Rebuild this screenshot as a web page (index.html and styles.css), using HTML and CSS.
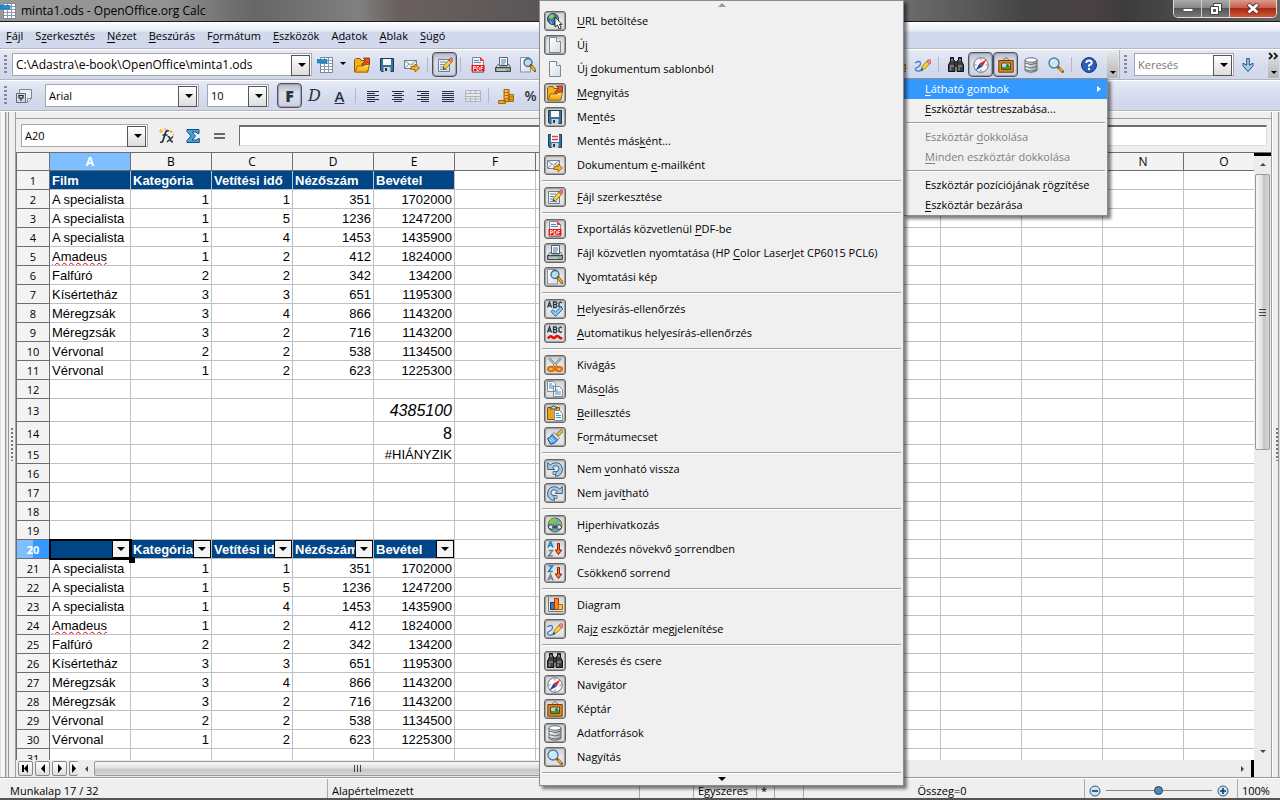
FILE: index.html
```html
<!DOCTYPE html>
<html lang="hu">
<head>
    <meta charset="UTF-8">
    <meta name="viewport" content="width=device-width, initial-scale=1.0">
    <title>minta1.ods - OpenOffice.org Calc</title>
    <link rel="stylesheet" href="styles.css">
</head>
<body>
    <!-- icon set -->
    <svg class="defs" aria-hidden="true">
        <defs>
            <linearGradient id="g-gold" x1="0" y1="0" x2="0" y2="1"><stop offset="0" stop-color="#ffe36b"/><stop offset="1" stop-color="#f0a000"/></linearGradient>
            <linearGradient id="g-page" x1="0" y1="0" x2="1" y2="1"><stop offset="0" stop-color="#fff"/><stop offset="1" stop-color="#d3dde6"/></linearGradient>
            <linearGradient id="g-blue" x1="0" y1="0" x2="0" y2="1"><stop offset="0" stop-color="#cfe9fb"/><stop offset="1" stop-color="#6fb0e0"/></linearGradient>
            <linearGradient id="g-metal" x1="0" y1="0" x2="1" y2="0"><stop offset="0" stop-color="#fafafa"/><stop offset="1" stop-color="#a2a8ac"/></linearGradient>
        </defs>
        <symbol id="i-calc" viewBox="0 0 16 16"><path d="M3.500.5h12v15h-12z" fill="#fff" stroke="#7b8794"/><path d="M7.500 1v14M11.500 1v14M4 3.500h11M4 6.500h11M4 9.500h11M4 12.500h11" stroke="#8d99a5"/><path d="M0 2.500h10v3.500H0z" fill="#1c8fd8" stroke="#0b6bb0" stroke-width=".6"/></symbol>
        <symbol id="i-url" viewBox="0 0 16 16"><circle cx="6" cy="6" r="5.500" fill="#3a78c0" stroke="#1d3f6c"/><path d="M2 3q2-2 4-2l1 3-3 2-2-1zM8 7l3-3 0 4-3 3zM2 8l3 1v2z" fill="#9ccb3b"/><path d="M8 4v10l2.400-2 1.800 4 2-1-1.700-3.600H15z" fill="#fff" stroke="#111" stroke-width=".9"/></symbol>
        <symbol id="i-page" viewBox="0 0 16 16"><path d="M2.500.5h7l4 4v11h-11z" fill="url(#g-page)" stroke="#7d8893"/><path d="M9.500.5v4h4" fill="#fff" stroke="#7d8893"/></symbol>
        <symbol id="i-open" viewBox="0 0 16 16"><path d="M.5 14.500V3L2 1.500h4l1 2h7v11z" fill="#f3b21c" stroke="#925a00"/><path d="M1 15.200L3.500 9H9l1.500-1.500h5L13.500 15.200z" fill="url(#g-gold)" stroke="#a56600"/><path d="M7.500 7.500l4-4-2-2.500h6v6l-2.200-2L9.500 9z" fill="#e4592a" stroke="#861f08" stroke-width=".8"/></symbol>
        <symbol id="i-save" viewBox="0 0 16 16"><path d="M1.500 1.500h13v13h-12l-1-1z" fill="#3f6f94" stroke="#173c5a"/><path d="M4 2h8v6H4z" fill="#f4f8fb"/><path d="M4.500 10h7v5h-7z" fill="#c9d4dc"/><path d="M6 11h2v3H6z" fill="#173c5a"/></symbol>
        <symbol id="i-saveas" viewBox="0 0 16 16"><path d="M1.500 1.500h13v13h-12l-1-1z" fill="#3f6f94" stroke="#173c5a"/><path d="M4 1h8v8H4z" fill="#fff"/><path d="M5 3.500h6M5 6.500h6" stroke="#e43a4a" stroke-width="1.600"/><path d="M4.500 10h7v5h-7z" fill="#c9d4dc"/><path d="M6 11h2v3H6z" fill="#173c5a"/></symbol>
        <symbol id="i-mail" viewBox="0 0 16 16"><path d="M.5 3.500h12v8H.5z" fill="#eef2f5" stroke="#71808d"/><path d="M1 4l5.500 4L12 4M1 11l4-4M12 11L8 7" fill="none" stroke="#71808d" stroke-width=".8"/><path d="M7 9.500h4V7l4.500 4-4.500 4v-2.500H7z" fill="#f7b030" stroke="#a25c00" stroke-width=".9"/></symbol>
        <symbol id="i-edit" viewBox="0 0 16 16"><path d="M1.500 2.500h11v12h-11z" fill="url(#g-page)" stroke="#6f7c88"/><path d="M3 5h6M3 7.500h4M3 10h3M3 12.500h7" stroke="#5b8bb2"/><path d="M6 12l1-3.500 6-6.500 2.500 2.300L9.400 11z" fill="#ffd23c" stroke="#7d5a12" stroke-width=".8"/><path d="M11.800 3.200L13.500 1q1.200-.6 2 .3.700.9-.1 1.900l-1.700 1.800z" fill="#f0708a" stroke="#a53850" stroke-width=".6"/><path d="M6 12l.5-1.800 1.300 1.300z" fill="#222"/></symbol>
        <symbol id="i-pdf" viewBox="0 0 16 16"><path d="M2.500.5h8l3 3v12h-11z" fill="#edf2f6" stroke="#7d8893"/><path d="M10 0l4 4h-4z" fill="#f33"/><path d="M4 3.500h5M4 5.500h7" stroke="#5b8bb2"/><path d="M1.500 8h13v6.500h-13z" fill="#e01818"/><path d="M3.500 13.500V9.500h1.800v2H4M7 9.500h1.500l.8 1v2l-.8 1H7zM11 13.500v-4h2M11 11.500h1.600" fill="none" stroke="#fff" stroke-width=".9"/></symbol>
        <symbol id="i-print" viewBox="0 0 16 16"><path d="M4.500.5h8v8h-8z" fill="#fff" stroke="#55626e"/><path d="M6 3h5M6 5h5M6 7h4" stroke="#3977b0"/><path d="M.8 10.500L3 7.500h1.500V9h8V7.500H14l1.500 3z" fill="#d8dde0" stroke="#4a5358" stroke-width=".8"/><path d="M.5 10.500h15v4h-15z" fill="#919b9d" stroke="#3e474b"/><path d="M2 13h9" stroke="#e4eaec"/><path d="M12 12.500h2" stroke="#5be02a" stroke-width="1.600"/></symbol>
        <symbol id="i-preview" viewBox="0 0 16 16"><path d="M.5.5H9L10.500 2v13H.5z" fill="url(#g-page)" stroke="#8793a0"/><circle cx="8" cy="5.500" r="4" fill="#b6dcf5" stroke="#456b8a" stroke-width="1.300"/><path d="M11 8.500l4 5" stroke="#7d5a12" stroke-width="3" stroke-linecap="round"/><path d="M11.500 9l3.400 4.400" stroke="#f7b92f" stroke-width="1.600"/></symbol>
        <symbol id="i-spell" viewBox="0 0 16 16"><path d="M.5 6.500L2.500 1l2 5.500M1.300 4.800h2.500M6.500 6.500V1H9l.8 1.200L9 3.500l1 1.500L9 6.500zM6.500 3.600H9M15 2l-1.500-1-1.500 1v3.500l1.500 1 1.500-1" fill="none" stroke="#22384c" stroke-width="1.300"/><path d="M4 10.500l2-1.800 2.300 2.500L13.500 6 16 8 8.500 15.300z" fill="#8fcdf7" stroke="#1b5a9c" stroke-width=".9"/></symbol>
        <symbol id="i-autospell" viewBox="0 0 16 16"><path d="M.5 7.500L2.500 2l2 5.500M1.300 5.800h2.500M6.500 7.500V2H9l.8 1.200L9 4.500 10 6 9 7.500zM6.500 4.600H9M15 3l-1.500-1-1.500 1v3.500l1.500 1 1.500-1" fill="none" stroke="#22384c" stroke-width="1.300"/><path d="M1 13.500q2-3.500 4-1.500t3.500 0q2-2 3.500 0t3 .5" fill="none" stroke="#d11" stroke-width="2.600"/></symbol>
        <symbol id="i-cut" viewBox="0 0 16 16"><path d="M2 1l9 10M14 1L5 11" stroke="#68747d" stroke-width="2.200"/><path d="M2 1l9 10M14 1L5 11" stroke="#dce2e6"/><ellipse cx="4" cy="12" rx="3" ry="2" fill="#ffd9a8" stroke="#df7208" stroke-width="2.400"/><ellipse cx="12" cy="12" rx="3" ry="2" fill="#ffd9a8" stroke="#df7208" stroke-width="2.400"/></symbol>
        <symbol id="i-copy" viewBox="0 0 16 16"><path d="M.5.5h6l2 2v8h-8zM6.500 5.500h6l3 3v7h-9z" fill="#f5f9fc" stroke="#7c8b99"/><path d="M2 3h3M2 5h5M2 7h4M8 9h3M8 11h6M8 13h6" stroke="#4f8bbd"/></symbol>
        <symbol id="i-paste" viewBox="0 0 16 16"><path d="M.5 2.500h12v12H.5z" fill="#e6a51c" stroke="#855600"/><path d="M3.500 4V2H5q1.500-3 3 0h1.500v2z" fill="#ccd3d8" stroke="#444"/><path d="M7.500 5.500h5l3 3v7h-8z" fill="#f8fbfd" stroke="#7c8b99"/><path d="M9 8.500h3M9 10.500h5M9 12.500h5" stroke="#4f8bbd"/></symbol>
        <symbol id="i-brush" viewBox="0 0 16 16"><path d="M9.500 5l4.500-4.500 2 2L11.500 7z" fill="#f2bd31" stroke="#7a5200" stroke-width=".8"/><path d="M7 3.500l5.500 5.500-2 2L5 6z" fill="#d8e2ea" stroke="#5a6c7c" stroke-width=".8"/><path d="M5 5.500l5.500 5.500Q7.500 15.500 3.500 15.300L.5 9.500Q3 9 5 5.500z" fill="#66abec" stroke="#1b4f90"/><path d="M2.500 10.500l2.500 2M4 9l3 3" stroke="#cfe8ff"/></symbol>
        <symbol id="i-undo" viewBox="0 0 16 16"><path d="M.7 1.500v7h7L5.500 6.300Q11 2.500 12 7.500 12 11 8 11H6.500l2 1.200v3.100Q15.500 15 15.400 8 14.500 0 6 2.200L3.300 4.100z" fill="#a9cce6" stroke="#3a6287"/><path d="M6 10.500h3v3H6z" fill="#a9cce6" stroke="#3a6287" stroke-width=".7"/></symbol>
        <symbol id="i-redo" viewBox="0 0 16 16"><path d="M15.300 1.500v7h-7l2.200-2.200Q5 2.500 4 7.500 4 11 8 11h1.500l-2 1.200v3.100Q.5 15 .6 8 1.500 0 10 2.200l2.700 1.900z" fill="#a9cce6" stroke="#3a6287"/><path d="M7 10.500h3v3H7z" fill="#a9cce6" stroke="#3a6287" stroke-width=".7"/></symbol>
        <symbol id="i-link" viewBox="0 0 16 16"><circle cx="8" cy="8" r="7" fill="#6aa3cf" stroke="#4a6c31"/><path d="M2 5q2-4 6-4l2 2-3 3-4 1zM10 5l4 0 .6 3-3 1z" fill="#8fc43c"/><rect x="1.500" y="8" width="6" height="4" rx="2" fill="#e4eaee" stroke="#37444f"/><rect x="8.500" y="8" width="6" height="4" rx="2" fill="#e4eaee" stroke="#37444f"/><path d="M5 10h6" stroke="#37444f" stroke-width="1.600"/></symbol>
        <symbol id="i-sortaz" viewBox="0 0 16 16"><path d="M1 6.500L3.500.5 6 6.500M2 4.500h3" fill="none" stroke="#1d83cf" stroke-width="1.600"/><path d="M1.500 9.500h4L1.500 15h4.300" fill="none" stroke="#788086" stroke-width="1.600"/><path d="M10.500 2.500h2V9h2.300l-3.300 4.500L8.200 9h2.300z" fill="#f27a38" stroke="#8b1e08"/></symbol>
        <symbol id="i-sortza" viewBox="0 0 16 16"><path d="M1.500 1h4L1.500 6.500h4.300" fill="none" stroke="#1d83cf" stroke-width="1.600"/><path d="M1 15.500L3.500 9.500 6 15.500M2 13.500h3" fill="none" stroke="#788086" stroke-width="1.600"/><path d="M10.500 2.500h2V9h2.300l-3.300 4.500L8.200 9h2.300z" fill="#f27a38" stroke="#8b1e08"/></symbol>
        <symbol id="i-chart" viewBox="0 0 16 16"><path d="M1.500 0v14.500H16" fill="none" stroke="#777"/><path d="M3.500 5.500h4v7h-4z" fill="#3f78a4" stroke="#173c5a"/><path d="M7.500 1.500h4v11h-4z" fill="#ff8432" stroke="#b12c00"/><path d="M11.500 7.500h4v5h-4z" fill="#ffc83c" stroke="#a86a00"/></symbol>
        <symbol id="i-draw" viewBox="0 0 16 16"><path d="M0 6q5-3 5.500 0T1 11q-1.500 3.500 3 3l4-1" fill="none" stroke="#3a80cf" stroke-width="1.300"/><path d="M6 13l1.500-4L13 3l3 2.500L10 11.500z" fill="#ffd03c" stroke="#8b6310" stroke-width=".8"/><path d="M11.500 4.500L13 3q1.500-1 2.500 0t.2 2.600L14.500 7z" fill="#f28b9c" stroke="#aa4050" stroke-width=".6"/><path d="M6 13l.7-2 1.400 1.300z" fill="#222"/></symbol>
        <symbol id="i-find" viewBox="0 0 16 16"><path d="M2.500.5h3v2.500l1.500 1v10.500H.5V8l2-4zM13.500.5h-3v2.500L9 4v10.500h6.500V8l-2-4z" fill="#3c4043" stroke="#111"/><path d="M7 5h2v4H7z" fill="#777" stroke="#111"/><path d="M2 9h4M10 9h4M3 3h2M11 3h2" stroke="#b7bbbe"/><path d="M2.500 10.500v3M11 10.500v3" stroke="#888" stroke-width="1.500"/></symbol>
        <symbol id="i-nav" viewBox="0 0 16 16"><circle cx="8" cy="8" r="7.300" fill="#f6f8fa" stroke="#6c757d"/><path d="M8 1.500v2M8 12.500v2M1.500 8h2M12.500 8h2" stroke="#7a858f"/><path d="M13.500 2.500L9.500 9.500 6.500 6.500z" fill="#e0252a"/><path d="M2.500 13.500L6.500 6.500l3 3z" fill="#1548a8"/></symbol>
        <symbol id="i-gallery" viewBox="0 0 16 16"><path d="M5 3l3-2.500L11 3" fill="none" stroke="#777"/><path d="M.8 3.500h14.400v11.700H.8z" fill="#d98a1e" stroke="#7b3a00"/><path d="M3.500 6h9v6.500h-9z" fill="#a9dcf5" stroke="#7b3a00"/><path d="M4 9.500q2 1 4 0t4 0V12H4z" fill="#3f9b32"/><circle cx="9.500" cy="8.500" r="1.500" fill="#2d7a28"/></symbol>
        <symbol id="i-db" viewBox="0 0 16 16"><path d="M2 3v10.500Q8 17 14 13.500V3z" fill="url(#g-metal)" stroke="#636b70"/><path d="M2 6q6 3 12 0M2 9.500q6 3 12 0M2 12.500q6 3 12 0" fill="none" stroke="#636b70"/><ellipse cx="8" cy="3" rx="6" ry="2.200" fill="#fff" stroke="#636b70"/></symbol>
        <symbol id="i-zoom" viewBox="0 0 16 16"><circle cx="6" cy="6" r="5" fill="#c9e6fa" stroke="#547c9e" stroke-width="1.400"/><path d="M3 5q1-2 3-2" fill="none" stroke="#fff"/><path d="M10.500 10.500l4 4" stroke="#8a5a08" stroke-width="3" stroke-linecap="round"/><path d="M11 11l3.300 3.300" stroke="#f8bb35" stroke-width="1.500"/></symbol>
        <symbol id="i-help" viewBox="0 0 16 16"><circle cx="8" cy="8" r="7.500" fill="#2a5fb4" stroke="#173a7c"/><path d="M5.200 6Q5.500 3.500 8 3.500t2.800 2.200Q10.800 7.200 8 8.300v1.500" fill="none" stroke="#fff" stroke-width="1.900"/><circle cx="8" cy="12" r="1.200" fill="#fff"/></symbol>
        <symbol id="i-down" viewBox="0 0 16 16"><path d="M6.700 1.500h2.600v6.700l3.700-2v2.500L8 14.500 3 8.700V6.200l3.700 2z" fill="#9fd0ea" stroke="#23567c"/></symbol>
        <symbol id="i-styles" viewBox="0 0 16 16"><path d="M3.500 1.500h12v9l-4 4h-8z" fill="#e8edf2" stroke="#798591"/><path d="M15 10.500h-3.500V14" fill="#fff" stroke="#798591"/><path d="M.5 5.500h9v9h-9z" fill="#d4dbe2" stroke="#5e6a76"/><path d="M3 7.500h4v2.500H3zM5 10v3" fill="none" stroke="#222" stroke-width="1.200"/></symbol>
        <symbol id="i-left" viewBox="0 0 16 16"><path d="M2 3.500h12M2 5.500h8M2 7.500h12M2 9.500h8M2 11.500h12M2 13.500h8" stroke="#25303b"/></symbol>
        <symbol id="i-center" viewBox="0 0 16 16"><path d="M2 3.500h12M4 5.500h8M2 7.500h12M4 9.500h8M2 11.500h12M4 13.500h8" stroke="#25303b"/></symbol>
        <symbol id="i-right" viewBox="0 0 16 16"><path d="M2 3.500h12M6 5.500h8M2 7.500h12M6 9.500h8M2 11.500h12M6 13.500h8" stroke="#25303b"/></symbol>
        <symbol id="i-justify" viewBox="0 0 16 16"><path d="M2 3.500h12M2 5.500h12M2 7.500h12M2 9.500h12M2 11.500h12M2 13.500h12" stroke="#25303b"/></symbol>
        <symbol id="i-merge" viewBox="0 0 16 16"><path d="M.5 2.500h15v11H.5zM.5 5.500h15M.5 8.500h15M.5 11h15M5.500 2.500v3M10.500 2.500v3M5.500 8.500v5M10.500 8.500v5" fill="#e6e8ee" stroke="#b0b3ba"/></symbol>
        <symbol id="i-coins" viewBox="0 0 16 16"><path d="M6 1.500h5v12H6zM11 6.500h4.500v7H11zM.5 12.500h7v3h-7z" fill="#f0a428" stroke="#a05c00" stroke-width=".9"/><path d="M6 4.500h5M6 7.500h5M6 10.500h5M11 9h4.500M11 11.500h4.500" stroke="#b56b00"/><path d="M7 3h2M7 6h2M7 9h2" stroke="#ffe89a"/></symbol>
        <symbol id="i-fx" viewBox="0 0 16 16"><path d="M1 14q2.500 1 3.200-2L6.500 4.500Q7.500 2 9.800 3M3.500 7h5" fill="none" stroke="#26333f" stroke-width="1.700"/><path d="M8.500 8.500q1.500-.5 2.500 2.500t3 3M14 8.500l-6 5.500" fill="none" stroke="#26333f" stroke-width="1.500"/><path d="M2 1v4M0 3h4M6 0v2M12 2v3M10.500 3.500h3M14.500 6v1.500" stroke="#f0b400" stroke-width="1.200"/></symbol>
        <symbol id="i-sum" viewBox="0 0 16 16"><path d="M2 1.500h12v4h-1.500L11 4H7l3.500 4L7 12h4.500l1.500-1.500h1.300v4H2v-2L6 8 2 3.500z" fill="#4aa3dd" stroke="#114f83"/></symbol>
        <symbol id="i-equal" viewBox="0 0 16 16"><path d="M3 6h11M3 10h11" stroke="#333f4a" stroke-width="1.600"/></symbol>
    </svg>

    <header class="titlebar">
        <svg class="icon"><use href="#i-calc"/></svg>
        <h1>minta1.ods - OpenOffice.org Calc</h1>
        <div class="window-buttons">
            <button class="win" aria-label="Kis méret"><svg width="12" height="10"><path d="M1 4.500h10v3H1z" fill="#fff" stroke="#555"/></svg></button>
            <button class="win" aria-label="Előző méret"><svg width="12" height="12"><path d="M3.500.5h8v8h-8z" fill="#fff" stroke="#444"/><path d="M.5 3.500h8v8h-8z" fill="#fff" stroke="#444"/><path d="M3.500 6.500h2v2h-2z" fill="#777" stroke="#444"/></svg></button>
            <button class="win win-close" aria-label="Bezárás"><svg width="14" height="12"><path d="M2 1l10 9M12 1L2 10" stroke="#5a3030" stroke-width="4.500"/><path d="M2.500 1.500l9 8M11.500 1.500l-9 8" stroke="#fff" stroke-width="2.700"/></svg></button>
        </div>
    </header>

    <nav class="menubar">
        <button><u>F</u>ájl</button>
        <button>S<u>z</u>erkesztés</button>
        <button><u>N</u>ézet</button>
        <button><u>B</u>eszúrás</button>
        <button>F<u>o</u>rmátum</button>
        <button><u>E</u>szközök</button>
        <button>A<u>d</u>atok</button>
        <button><u>A</u>blak</button>
        <button><u>S</u>úgó</button>
    </nav>

    <div class="toolbar">
        <span class="handle"></span>
        <span class="combo combo-url"><input type="text" aria-label="URL betöltése" value="C:\Adastra\e-book\OpenOffice\minta1.ods"></span>
        <button class="tool" aria-label="Új"><svg class="icon"><use href="#i-calc"/></svg></button>
        <button class="tool-arrow" aria-label="Új dokumentum típusa"></button>
        <button class="tool" aria-label="Megnyitás"><svg class="icon"><use href="#i-open"/></svg></button>
        <button class="tool" aria-label="Mentés"><svg class="icon"><use href="#i-save"/></svg></button>
        <button class="tool" aria-label="Dokumentum e-mailként"><svg class="icon"><use href="#i-mail"/></svg></button>
        <span class="tool-sep"></span>
        <button class="tool pressed" aria-label="Fájl szerkesztése"><svg class="icon"><use href="#i-edit"/></svg></button>
        <span class="tool-sep"></span>
        <button class="tool" aria-label="Exportálás PDF-be"><svg class="icon"><use href="#i-pdf"/></svg></button>
        <button class="tool" aria-label="Nyomtatás"><svg class="icon"><use href="#i-print"/></svg></button>
        <button class="tool" aria-label="Nyomtatási kép"><svg class="icon"><use href="#i-preview"/></svg></button>
        <span class="fill"></span>
        <button class="tool" aria-label="Diagram"><svg class="icon"><use href="#i-chart"/></svg></button>
        <button class="tool" aria-label="Rajz eszköztár"><svg class="icon"><use href="#i-draw"/></svg></button>
        <span class="tool-sep"></span>
        <button class="tool" aria-label="Keresés és csere"><svg class="icon"><use href="#i-find"/></svg></button>
        <button class="tool pressed" aria-label="Navigátor"><svg class="icon"><use href="#i-nav"/></svg></button>
        <button class="tool pressed" aria-label="Képtár"><svg class="icon"><use href="#i-gallery"/></svg></button>
        <button class="tool" aria-label="Adatforrások"><svg class="icon"><use href="#i-db"/></svg></button>
        <button class="tool" aria-label="Nagyítás"><svg class="icon"><use href="#i-zoom"/></svg></button>
        <span class="tool-sep"></span>
        <button class="tool" aria-label="Súgó"><svg class="icon"><use href="#i-help"/></svg></button>
        <button class="overflow" aria-label="Eszköztár beállításai"></button>
        <div class="search-bar">
            <span class="handle"></span>
            <span class="combo combo-search"><input type="text" aria-label="Keresés" placeholder="Keresés"></span>
            <button class="tool" aria-label="Következő keresése"><svg class="icon"><use href="#i-down"/></svg></button>
        </div>
        <button class="overflow overflow-more" aria-label="További gombok"><svg width="11" height="8"><path d="M1 1l3 3-3 3M6 1l3 3-3 3" fill="none" stroke="#000" stroke-width="1.600"/></svg></button>
    </div>

    <div class="toolbar">
        <span class="handle"></span>
        <button class="tool tool-styles" aria-label="Stílusok"><svg class="icon"><use href="#i-styles"/></svg></button>
        <span class="combo combo-font"><select aria-label="Betűnév"><option>Arial</option></select></span>
        <span class="combo combo-size"><select aria-label="Betűméret"><option>10</option></select></span>
        <button class="tool pressed letter bold">F</button>
        <button class="tool letter italic">D</button>
        <button class="tool letter underlined">A</button>
        <span class="tool-sep"></span>
        <button class="tool" aria-label="Balra"><svg class="icon"><use href="#i-left"/></svg></button>
        <button class="tool" aria-label="Középre"><svg class="icon"><use href="#i-center"/></svg></button>
        <button class="tool" aria-label="Jobbra"><svg class="icon"><use href="#i-right"/></svg></button>
        <button class="tool" aria-label="Sorkizárt"><svg class="icon"><use href="#i-justify"/></svg></button>
        <button class="tool" aria-label="Cellaegyesítés"><svg class="icon"><use href="#i-merge"/></svg></button>
        <span class="tool-sep"></span>
        <button class="tool" aria-label="Pénznem"><svg class="icon"><use href="#i-coins"/></svg></button>
        <button class="tool letter percent">%</button>
    </div>

    <main class="workspace">
        <div class="gutter"><span class="grip"></span></div>
        <div class="document">
            <div class="formula-bar">
                <span class="combo combo-name"><select aria-label="Névmező"><option>A20</option></select></span>
                <button class="tool" aria-label="Függvénytündér"><svg class="icon"><use href="#i-fx"/></svg></button>
                <button class="tool" aria-label="Összeg"><svg class="icon"><use href="#i-sum"/></svg></button>
                <button class="tool" aria-label="Függvény"><svg class="icon"><use href="#i-equal"/></svg></button>
                <input class="formula" type="text" aria-label="Beviteli sor">
            </div>
            <div class="sheet-area">
                <div class="sheet-view">
                    <table class="sheet">
                        <thead><tr id="columns"></tr></thead>
                        <tbody id="rows"></tbody>
                    </table>
                </div>
                <div class="vscroll">
                    <span class="arrow arrow-up"></span>
                    <span class="vthumb"><i></i><i></i><i></i></span>
                    <span class="arrow arrow-down"></span>
                </div>
            </div>
            <div class="hscroll">
                <button class="tab-nav" aria-label="Első lap"><svg width="10" height="9"><path d="M2 1v7" stroke="#000" stroke-width="2"/><path d="M7 0v9L3 4.500z"/></svg></button>
                <button class="tab-nav" aria-label="Előző lap"><svg width="10" height="9"><path d="M7 0v9L3 4.500z"/></svg></button>
                <button class="tab-nav" aria-label="Következő lap"><svg width="10" height="9"><path d="M3 0v9l4-4.500z"/></svg></button>
                <button class="tab-nav tab-nav-cut" aria-label="Utolsó lap"><svg width="10" height="9"><path d="M2 0v9l4-4.500z"/></svg></button>
                <span class="arrow arrow-left"></span>
                <span class="hthumb"><i></i><i></i><i></i></span>
                <span class="fill"></span>
                <span class="arrow arrow-right"></span>
                <span class="split"></span>
            </div>
        </div>
        <div class="gutter gutter-right"><span class="grip"></span></div>
    </main>

    <footer class="statusbar">
        <span class="status-sheet">Munkalap 17 / 32</span>
        <span class="status-style">Alapértelmezett</span>
        <span class="status-empty"></span>
        <span class="status-mode">Egyszeres</span>
        <span class="status-mark">*</span>
        <span class="status-sign"></span>
        <span class="status-sum">Összeg=0</span>
        <span class="status-zoom">
            <button class="zoom-button" aria-label="Kicsinyítés"><svg width="12" height="12"><circle cx="6" cy="6" r="5" fill="#cbe5f8" stroke="#2d5c86"/><path d="M3 6h6" stroke="#173c5a" stroke-width="1.600"/></svg></button>
            <input type="range" aria-label="Nagyítás mértéke" min="0" max="100" value="49">
            <button class="zoom-button" aria-label="Nagyítás növelése"><svg width="12" height="12"><circle cx="6" cy="6" r="5" fill="#cbe5f8" stroke="#2d5c86"/><path d="M3 6h6M6 3v6" stroke="#173c5a" stroke-width="1.600"/></svg></button>
        </span>
        <span class="status-percent">100%</span>
    </footer>

    <!-- toolbar options menu -->
    <div class="popup popup-options">
        <button class="selected"><span><u>L</u>átható gombok</span></button>
        <button><u>E</u>szköztár testreszabása...</button>
        <hr>
        <button disabled>Eszköztár <u>d</u>okkolása</button>
        <button disabled><u>M</u>inden eszköztár dokkolása</button>
        <hr>
        <button>Eszköztár pozíciójának <u>r</u>ögzítése</button>
        <button><u>E</u>szköztár bezárása</button>
    </div>

    <!-- visible buttons submenu -->
    <div class="popup popup-buttons">
        <span class="scroll-hint"></span>
        <button class="on"><svg class="icon"><use href="#i-url"/></svg><span><u>U</u>RL betöltése</span></button>
        <button class="on"><svg class="icon"><use href="#i-page"/></svg><span>Ú<u>j</u></span></button>
        <button><svg class="icon"><use href="#i-page"/></svg><span>Új <u>d</u>okumentum sablonból</span></button>
        <button class="on"><svg class="icon"><use href="#i-open"/></svg><span><u>M</u>egnyitás</span></button>
        <button class="on"><svg class="icon"><use href="#i-save"/></svg><span>Me<u>n</u>tés</span></button>
        <button><svg class="icon"><use href="#i-saveas"/></svg><span>Mentés más<u>k</u>ént...</span></button>
        <button class="on"><svg class="icon"><use href="#i-mail"/></svg><span>Dokumentum <u>e</u>-mailként</span></button>
        <hr>
        <button class="on"><svg class="icon"><use href="#i-edit"/></svg><span><u>F</u>ájl szerkesztése</span></button>
        <hr>
        <button class="on"><svg class="icon"><use href="#i-pdf"/></svg><span>Exportálás közvetlenül <u>P</u>DF-be</span></button>
        <button class="on"><svg class="icon"><use href="#i-print"/></svg><span>Fájl közvetlen nyomtatása (HP <u>C</u>olor LaserJet CP6015 PCL6)</span></button>
        <button class="on"><svg class="icon"><use href="#i-preview"/></svg><span>N<u>y</u>omtatási kép</span></button>
        <hr>
        <button class="on"><svg class="icon"><use href="#i-spell"/></svg><span><u>H</u>elyesírás-ellenőrzés</span></button>
        <button class="on"><svg class="icon"><use href="#i-autospell"/></svg><span><u>A</u>utomatikus helyesírás-ellenőrzés</span></button>
        <hr>
        <button class="on"><svg class="icon"><use href="#i-cut"/></svg><span>Kivá<u>g</u>ás</span></button>
        <button class="on"><svg class="icon"><use href="#i-copy"/></svg><span>Más<u>o</u>lás</span></button>
        <button class="on"><svg class="icon"><use href="#i-paste"/></svg><span><u>B</u>eillesztés</span></button>
        <button class="on"><svg class="icon"><use href="#i-brush"/></svg><span>Fo<u>r</u>mátumecset</span></button>
        <hr>
        <button class="on"><svg class="icon"><use href="#i-undo"/></svg><span>Nem <u>v</u>onható vissza</span></button>
        <button class="on"><svg class="icon"><use href="#i-redo"/></svg><span>Nem javí<u>t</u>ható</span></button>
        <hr>
        <button class="on"><svg class="icon"><use href="#i-link"/></svg><span>H<u>i</u>perhivatkozás</span></button>
        <button class="on"><svg class="icon"><use href="#i-sortaz"/></svg><span>Rendezés növekvő <u>s</u>orrendben</span></button>
        <button class="on"><svg class="icon"><use href="#i-sortza"/></svg><span>Csökkenő sorrend</span></button>
        <hr>
        <button class="on"><svg class="icon"><use href="#i-chart"/></svg><span>Diagram</span></button>
        <button class="on"><svg class="icon"><use href="#i-draw"/></svg><span>Raj<u>z</u> eszköztár megjelenítése</span></button>
        <hr>
        <button class="on"><svg class="icon"><use href="#i-find"/></svg><span>Keresés és csere</span></button>
        <button class="on"><svg class="icon"><use href="#i-nav"/></svg><span>Navigátor</span></button>
        <button class="on"><svg class="icon"><use href="#i-gallery"/></svg><span>Képtár</span></button>
        <button class="on"><svg class="icon"><use href="#i-db"/></svg><span>Adatforrások</span></button>
        <button class="on"><svg class="icon"><use href="#i-zoom"/></svg><span>Nagyítás</span></button>
        <hr>
        <span class="scroll-hint scroll-hint-down"></span>
    </div>

    <script src="script.js"></script>
</body>
</html>
```

FILE: styles.css
```css
* {
    box-sizing: border-box;
}
body {
    margin: 0;
    height: 100vh;
    display: flex;
    flex-direction: column;
    overflow: hidden;
    position: relative;
    background-color: #efefef;
    color: #000;
    font-family: "Open Sans", "Noto Sans", sans-serif;
    font-size: 11px;
    line-height: 16px;
}
button, input, select {
    font: inherit;
    color: inherit;
}
button {
    border: none;
    background: none;
    padding: 0;
    white-space: nowrap;
}
u {
    text-underline-offset: 2px;
}
.defs {
    position: absolute;
    width: 0;
    height: 0;
}
.icon {
    width: 16px;
    height: 16px;
    flex: none;
    display: block;
}
.fill {
    flex: 1;
}

/* title bar */
.titlebar {
    height: 22px;
    flex: none;
    display: flex;
    align-items: center;
    gap: 5px;
    border-bottom: 1px solid #1c1c1c;
    background: linear-gradient(to right, #989898 0, #929292 13%, #707070 18%, #666 20%, #808080 28%, #6b6060 31%, #5a5657 42%, #4c4a4c 65%, #6a6a6a 71%, #585858 76%, #444 80%, #4a4145 85%, #3c3c3c 88%, #666 100%);
}
.titlebar h1 {
    margin: 0;
    font-size: 12px;
    font-weight: normal;
    flex: 1;
}
.window-buttons {
    display: flex;
    align-self: flex-start;
    height: 18px;
    margin-right: 3px;
    border: 1px solid #ddd;
    border-top: none;
    border-radius: 0 0 5px 5px;
    overflow: hidden;
}
.win {
    width: 28px;
    display: flex;
    align-items: center;
    justify-content: center;
    border-right: 1px solid #ccc;
    background: linear-gradient(#aaa, #888 45%, #555 50%, #777);
}
.win-close {
    width: 46px;
    border: none;
    background: linear-gradient(#dc9a8c, #c8604a 45%, #a82a10 50%, #d0583a);
}

/* menu bar */
.menubar {
    height: 27px;
    flex: none;
    display: flex;
    gap: 12px;
    padding: 2px 6px 0;
    border-bottom: 1px solid #b9b9b9;
    background: linear-gradient(#fff, #e6ebf7 9px, #d3d9ed 10px, #d3d9ed);
}

/* toolbars */
.toolbar {
    height: 31px;
    flex: none;
    display: flex;
    align-items: center;
    padding-left: 4px;
    border-top: 1px solid #fff;
    border-bottom: 1px solid #b4b4b4;
    background: linear-gradient(#e6eaf6, #d5dbed 60%, #d1d7ec);
}
.handle {
    width: 3px;
    height: 19px;
    flex: none;
    background: repeating-linear-gradient(#868a96 0 2px, transparent 2px 4px);
}
.combo {
    position: relative;
    height: 23px;
    flex: none;
    border: 1px solid #a4a6b0;
    padding: 1px;
    background-color: #fff;
}
.combo input, .combo select {
    width: 100%;
    height: 19px;
    display: block;
    padding: 0 20px 0 2px;
    border: none;
    outline: none;
    background: none;
    appearance: none;
}
.combo-url input {
    font-size: 12px;
}
.combo input::placeholder {
    color: #777;
    opacity: 1;
}
/* drop-down button over the right end of the field */
.combo::before {
    content: "";
    position: absolute;
    right: 1px;
    top: 1px;
    width: 17px;
    height: 19px;
    border: 1px solid #555;
    background: linear-gradient(#fff, #ddd);
    pointer-events: none;
}
.combo::after {
    content: "";
    position: absolute;
    right: 5px;
    top: 9px;
    border: 4px solid transparent;
    border-top: 4px solid #000;
    pointer-events: none;
}
.combo-url {
    width: 300px;
    margin-left: 5px;
}
.combo-font {
    width: 154px;
    margin-left: 9px;
}
.combo-size {
    width: 62px;
    margin: 0 8px;
}
.combo-name {
    width: 127px;
    margin-right: 6px;
}
.combo-search {
    width: 100px;
    margin: 0 1px 0 7px;
}
.tool {
    width: 25px;
    height: 25px;
    flex: none;
    display: flex;
    align-items: center;
    justify-content: center;
}
.tool-styles {
    margin-left: 4px;
}
.pressed {
    border: 1px solid #4c515c;
    border-radius: 4px;
    background: linear-gradient(#b4b9c8, #dde1ec 40%, #ccd2e2);
    box-shadow: inset 0 0 1px 1px #9ba0ae;
}
.tool-arrow {
    width: 12px;
    height: 25px;
    flex: none;
    display: flex;
    align-items: center;
    justify-content: center;
}
.tool-arrow::after {
    content: "";
    border: 3px solid transparent;
    border-top-color: #000;
}
.tool-sep {
    width: 1px;
    height: 15px;
    flex: none;
    margin: 0 4px 0 3px;
    background-color: #b5b9c4;
}
.letter {
    font-size: 18px;
    line-height: 20px;
    color: #28323c;
}
.bold {
    font-weight: 800;
    font-size: 16px;
}
.italic {
    font-family: "DejaVu Serif", serif;
    font-style: italic;
    font-size: 16px;
}
.underlined {
    font-size: 15px;
    font-weight: 600;
    text-decoration: underline 1px;
}
.percent {
    font-size: 14px;
    font-weight: 600;
}
.overflow {
    width: 11px;
    height: 26px;
    flex: none;
    margin: 0 0 0 6px;
    display: flex;
    flex-direction: column;
    align-items: center;
    justify-content: flex-end;
    background: linear-gradient(#e4e4e6, #b4b4b8);
}
.overflow::after {
    content: "";
    border: 3px solid transparent;
    border-top-color: #000;
    margin-bottom: 1px;
}
.overflow-more {
    justify-content: space-between;
    margin: 0 1px 0 8px;
}
.search-bar {
    display: flex;
    align-items: center;
    height: 30px;
    margin-left: 1px;
    padding-left: 4px;
    border-left: 1px solid #b4b4b4;
}

/* workspace */
.workspace {
    flex: 1;
    min-height: 0;
    display: flex;
    border-top: 1px solid #fff;
    border-bottom: 1px solid #9a9a9a;
}
.gutter {
    width: 15px;
    flex: none;
    display: flex;
    align-items: center;
    justify-content: flex-end;
    padding-right: 2px;
    background: linear-gradient(to right, #ddd 1px, #f6f6f6 1px 5px, #999 5px 6px, #ccc 6px 7px, #efefef 7px 8px, #999 8px 9px, #efefef 9px);
}
.gutter-right {
    width: 8px;
    background: linear-gradient(to right, #fff 1px, #efefef 1px 6px, #999 6px 7px, #ddd 7px);
}
.grip {
    width: 2px;
    height: 33px;
    background: repeating-linear-gradient(#777 0 2px, transparent 2px 4px);
}
.document {
    flex: 1;
    min-width: 0;
    display: flex;
    flex-direction: column;
    padding-top: 6px;
    border-left: 1px solid #a0a0a0;
    border-right: 1px solid #a0a0a0;
}
.formula-bar {
    height: 34px;
    flex: none;
    display: flex;
    align-items: center;
    padding: 0 4px 0 5px;
    border-top: 1px solid #a0a0a0;
}
.formula-bar .tool {
    margin-right: 1px;
}
.formula {
    flex: 1;
    min-width: 0;
    height: 21px;
    margin-left: 7px;
    border: 1px solid #ddd;
    border-top: 2px solid #6e6e6e;
    border-left: 1px solid #6e6e6e;
    background-color: #fff;
    outline: none;
}
.sheet-area {
    flex: 1;
    min-height: 0;
    display: flex;
    border-top: 1px solid #6e6e6e;
    border-left: 1px solid #6e6e6e;
}
.sheet-view {
    flex: 1;
    min-width: 0;
    overflow: hidden;
    background-color: #fff;
}

/* spreadsheet */
.sheet {
    width: 1248px;
    table-layout: fixed;
    border-spacing: 0;
    font-family: "Liberation Sans", Arial, sans-serif;
    font-size: 13px;
    line-height: 16px;
}
.sheet tr {
    height: 19px;
}
.sheet .tall {
    height: 23px;
}
.sheet th {
    width: 81px;
    padding: 1px 0 0;
    border-right: 1px solid #6e6e6e;
    border-bottom: 1px solid #6e6e6e;
    background-color: #f3f3f3;
    font-family: "Open Sans", sans-serif;
    font-size: 11px;
    font-weight: normal;
}
.sheet thead tr {
    height: 18px;
}
.sheet thead th {
    padding: 0;
    font-size: 12px;
}
.sheet th.corner {
    width: 33px;
}
.sheet th.current {
    color: #fff;
    font-weight: bold;
    background-color: #80bfff;
}
.sheet tbody th.current {
    background: linear-gradient(to right, #80bfff 50%, #3399ff 50%);
}
.sheet td {
    padding: 2px 2px 0;
    border-right: 1px solid #c0c0c0;
    border-bottom: 1px solid #c0c0c0;
    white-space: nowrap;
    overflow: hidden;
}
.sheet .number {
    text-align: right;
}
.sheet .head {
    background-color: #004586;
    color: #fff;
    font-weight: bold;
}
.sheet .filter {
    padding: 0 0 0 2px;
    line-height: 20px;
}
.sheet .filter div {
    display: flex;
    height: 18px;
}
.sheet .filter span {
    flex: 1;
    min-width: 0;
    overflow: hidden;
}
.sheet .filter button {
    width: 18px;
    height: 18px;
    flex: none;
    border: 1px solid #000;
    background-color: #f3f3f3;
    display: flex;
    align-items: center;
    justify-content: center;
}
.sheet .filter button::after {
    content: "";
    border: 4px solid transparent;
    border-top-color: #000;
    margin-top: 4px;
}
.sheet .cursor {
    position: relative;
    overflow: visible;
    outline: 2px solid #000;
    outline-offset: -1px;
}
.sheet .cursor::after {
    content: "";
    position: absolute;
    right: -5px;
    bottom: -5px;
    width: 6px;
    height: 6px;
    background-color: #000;
}
.sheet .misspelled {
    text-decoration: underline wavy #d00 1px;
    text-decoration-skip-ink: none;
    text-underline-offset: 1px;
}
.sheet .big {
    font-size: 16px;
}
.sheet .slanted {
    font-style: italic;
}

/* scroll bars */
.vscroll {
    width: 17px;
    flex: none;
    display: flex;
    flex-direction: column;
    align-items: center;
    padding-bottom: 4px;
    border-top: 3px solid #000;
    background-color: #ececec;
}
.arrow {
    flex: none;
    border: 3px solid transparent;
}
.arrow-up {
    margin: 4px 0 8px;
    border-bottom-color: #444;
}
.arrow-down {
    margin-top: auto;
    border-top-color: #444;
}
.arrow-left {
    margin: 0 6px 0 2px;
    border-right-color: #444;
}
.arrow-right {
    margin-right: 4px;
    border-left-color: #444;
}
.vthumb {
    width: 15px;
    height: 46%;
    display: flex;
    flex-direction: column;
    align-items: center;
    justify-content: center;
    gap: 2px;
    border: 1px solid #999;
    border-radius: 2px;
    background: linear-gradient(to right, #f8f8f8, #e2e2e4 45%, #c4c4c8 60%, #d8d8dc);
}
.vthumb i {
    width: 7px;
    height: 1px;
    background-color: #444;
}
.hscroll {
    height: 17px;
    flex: none;
    display: flex;
    align-items: center;
    padding-left: 2px;
    background-color: #ececec;
}
.tab-nav {
    width: 15px;
    height: 15px;
    flex: none;
    margin-right: 2px;
    display: flex;
    align-items: center;
    justify-content: center;
    border: 1px solid #888;
    border-radius: 2px;
    background: linear-gradient(#fff, #ddd);
}
.tab-nav-cut {
    width: 9px;
    border-right: none;
    overflow: hidden;
    justify-content: flex-start;
}
.hthumb {
    width: 42%;
    height: 15px;
    display: flex;
    align-items: center;
    justify-content: center;
    gap: 2px;
    border: 1px solid #999;
    border-radius: 2px;
    background: linear-gradient(#f8f8f8, #e2e2e4 45%, #c4c4c8 60%, #d8d8dc);
}
.hthumb i {
    width: 1px;
    height: 7px;
    background-color: #444;
}
.split {
    width: 3px;
    height: 17px;
    margin-right: 17px;
    background-color: #000;
}

/* status bar */
.statusbar {
    height: 22px;
    flex: none;
    display: flex;
    border-top: 1px solid #fff;
    border-bottom: 2px solid #555;
    line-height: 24px;
}
.statusbar > span {
    flex: none;
    height: 19px;
    padding-left: 4px;
    border-left: 1px solid #aaa;
    white-space: nowrap;
}
.statusbar .status-sheet {
    width: 327px;
    padding-left: 10px;
    border: none;
}
.status-style {
    width: 312px;
}
.status-empty {
    width: 54px;
}
.status-mode {
    width: 63px;
}
.status-mark {
    width: 18px;
}
.status-sign {
    width: 29px;
}
.statusbar .status-sum {
    flex: 1;
    padding: 0 4px 0 0;
    text-align: center;
}
.status-zoom {
    width: 153px;
    display: flex;
    align-items: center;
    gap: 5px;
}
.zoom-button svg {
    display: block;
    margin-top: 4px;
}
.status-zoom input {
    width: 106px;
    height: 16px;
    margin: 4px 0 0 0;
    appearance: none;
    background: linear-gradient(#888, #888) center / 100% 1px no-repeat;
}
.status-zoom input::-webkit-slider-thumb {
    appearance: none;
    width: 9px;
    height: 9px;
    border: 1px solid #1d4567;
    border-radius: 5px;
    background-color: #5588ad;
}
.status-percent {
    width: 43px;
}

/* popup menus */
.popup {
    position: absolute;
    display: flex;
    flex-direction: column;
    border: 1px solid #8c8c8c;
    background-color: #f0f0f0;
    box-shadow: 3px 3px 3px rgba(0, 0, 0, 0.5);
}
.popup hr {
    width: 100%;
    height: 8px;
    margin: 0;
    border: none;
    background: linear-gradient(transparent 3px, #a0a0a0 3px 4px, #fff 4px 5px, transparent 5px) center / calc(100% - 4px) 8px no-repeat;
}
.popup-options {
    top: 78px;
    right: 172px;
    width: 205px;
}
.popup-options button {
    height: 20px;
    padding-left: 21px;
    text-align: left;
}
.popup-options button:disabled {
    color: #808080;
}
.popup-options .selected {
    display: flex;
    align-items: center;
    justify-content: space-between;
    padding-right: 3px;
    background-color: #3399ff;
    color: #fff;
}
.popup-options .selected::after {
    content: "";
    border: 3px solid transparent;
    border-left: 4px solid #fff;
}
.popup-buttons {
    top: 0;
    right: 376px;
    width: 365px;
}
.popup-buttons button {
    height: 24px;
    display: flex;
    align-items: center;
    gap: 11px;
    padding-left: 4px;
}
.popup-buttons .icon {
    width: 22px;
    height: 20px;
    padding: 2px 3px;
    border-radius: 3px;
}
.popup-buttons .on .icon {
    padding: 1px 2px;
    border: 1px solid #666;
    background: linear-gradient(#cfcfcf, #e8e8e8 50%, #ddd);
    box-shadow: inset 0 0 1px 1px #999;
}
.scroll-hint {
    align-self: center;
    height: 8px;
    border: 4px solid transparent;
    border-top-width: 0;
    border-bottom-color: #999;
    margin-top: -2px;
    margin-bottom: 2px;
}
.scroll-hint-down {
    height: 8px;
    margin: 0;
    border-width: 4px;
    border-top-color: #000;
    border-bottom-color: transparent;
}
```

FILE: script.js
```js
const films = [
    ['A specialista', 1, 1, 351, 1702000],
    ['A specialista', 1, 5, 1236, 1247200],
    ['A specialista', 1, 4, 1453, 1435900],
    ['Amadeus', 1, 2, 412, 1824000],
    ['Falfúró', 2, 2, 342, 134200],
    ['Kísértetház', 3, 3, 651, 1195300],
    ['Méregzsák', 3, 4, 866, 1143200],
    ['Méregzsák', 3, 2, 716, 1143200],
    ['Vérvonal', 2, 2, 538, 1134500],
    ['Vérvonal', 1, 2, 623, 1225300]
];
const heads = ['Film', 'Kategória', 'Vetítési idő', 'Nézőszám', 'Bevétel'];
const letters = 'ABCDEFGHIJKLMNO'.split('');

document.getElementById('columns').innerHTML = '<th class="corner"></th>' +
    letters.map((l, i) => `<th class="${i === 0 ? 'current' : ''}">${l}</th>`).join('');

function cell(row, col) {
    if (row === 1 && col < 5) {
        return `<td class="head">${heads[col]}</td>`;
    }
    if (row === 20 && col < 5) {
        const text = col === 0 ? '' : heads[col];
        return `<td class="head filter ${col === 0 ? 'cursor' : ''}"><div><span>${text}</span><button aria-label="Szűrő"></button></div></td>`;
    }
    if (col === 4 && row === 13) return '<td class="number big slanted">4385100</td>';
    if (col === 4 && row === 14) return '<td class="number big">8</td>';
    if (col === 4 && row === 15) return '<td class="number">#HIÁNYZIK</td>';

    const film = row > 20 ? films[row - 21] : films[row - 2];
    if (!film || col > 4) return '<td></td>';
    if (col > 0) return `<td class="number">${film[col]}</td>`;
    return film[0] === 'Amadeus' ? '<td><span class="misspelled">Amadeus</span></td>' : `<td>${film[0]}</td>`;
}

let html = '';
for (let row = 1; row <= 31; row++) {
    const tall = row === 13 || row === 14 ? 'tall' : '';
    html += `<tr class="${tall}"><th class="${row === 20 ? 'current' : ''}">${row}</th>`;
    html += letters.map((l, col) => cell(row, col)).join('') + '</tr>';
}
document.getElementById('rows').innerHTML = html;
```
